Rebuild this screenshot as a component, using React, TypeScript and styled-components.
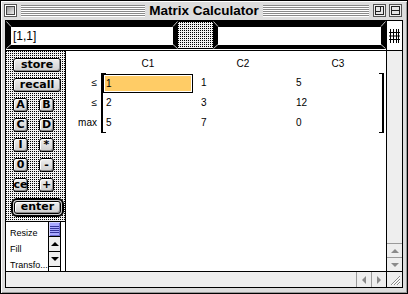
import React from "react";
import styled, { createGlobalStyle, css } from "styled-components";

const GlobalStyle = createGlobalStyle`
  html, body { margin: 0; padding: 0; background: #fff; }
  body { width: 408px; height: 294px; overflow: hidden; }
  #root { width: 408px; height: 294px; }
`;

const dither = css`
  background-color: #000;
  background-image:
    linear-gradient(to right, transparent 1px, #f2f2f2 1px),
    linear-gradient(to bottom, transparent 1px, #f2f2f2 1px);
  background-size: 2px 2px;
`;

const Window = styled.div`
  box-sizing: border-box;
  width: 408px;
  height: 294px;
  border: 1px solid #000;
  background: #dddddd;
  box-shadow: inset 1px 1px 0 #fff, inset -1px -1px 0 #999;
  display: flex;
  flex-direction: column;
`;

const TitleBar = styled.div`
  height: 19px;
  flex: none;
  display: grid;
  grid-template-columns: 1fr auto 1fr;
  align-items: center;
`;

const TitleSide = styled.div<{ $right?: boolean }>`
  display: flex;
  align-items: center;
  gap: ${(p) => (p.$right ? "4px" : "4px")};
  height: 100%;
  padding: ${(p) => (p.$right ? "0 5px 0 0" : "0 0 0 3px")};
`;

const Stripes = styled.div`
  flex: 1;
  height: 12px;
  background: repeating-linear-gradient(to bottom, #8a8a8a 0 1px, #ffffff 1px 2px);
`;

const TitleText = styled.div`
  padding: 0 4px;
  font-family: "Liberation Sans", Arial, sans-serif;
  font-weight: bold;
  font-size: 13.5px;
  line-height: 19px;
  color: #000;
  white-space: nowrap;
`;

const BoxGroup = styled.div`
  display: flex;
  gap: 3px;
`;

const Content = styled.div`
  margin: 0 4px 5px 4px;
  border: 1px solid #000;
  flex: 1;
  display: flex;
  flex-direction: column;
  background: #fff;
  min-height: 0;
`;

const TopRow = styled.div`
  box-sizing: border-box;
  height: 30px;
  flex: none;
  display: flex;
  align-items: flex-start;
  border-bottom: 1px solid #000;
  background: #fff;
`;

const FieldFrame = styled.div<{ $w: number }>`
  position: relative;
  box-sizing: border-box;
  width: ${(p) => p.$w}px;
  height: 28px;
  background: #000;
  padding: 6px 5px 4px 5px;
`;

const FieldInner = styled.div`
  height: 18px;
  background: #fff;
  padding-left: 2px;
  font-family: "Liberation Sans", Arial, sans-serif;
  font-size: 12px;
  line-height: 18px;
  color: #000;
`;

const CornerMarks = styled.svg`
  position: absolute;
  inset: 0;
  pointer-events: none;
`;

const Splitter = styled.div`
  box-sizing: border-box;
  width: 35px;
  height: 28px;
  border-top: 1px solid #000;
  border-bottom: 1px solid #000;
  ${dither};
`;

const IconCell = styled.div`
  box-sizing: border-box;
  width: 16px;
  align-self: stretch;
  border-left: 1px solid #000;
  display: flex;
  justify-content: center;
  padding-top: 8px;
  margin-left: auto;
`;

const Lower = styled.div`
  flex: 1;
  display: flex;
  border-bottom: 1px solid #000;
  min-height: 0;
`;

const LeftPanel = styled.div`
  box-sizing: border-box;
  width: 60px;
  border-right: 1px solid #000;
  display: flex;
  flex-direction: column;
`;

const Keypad = styled.div`
  flex: 1;
  ${dither};
  padding: 7px 0 0 7px;
  display: flex;
  flex-direction: column;
  gap: 6px;
`;

const KeyRow = styled.div`
  display: flex;
  gap: 11px;
`;

const Key = styled.button<{ $w?: number; $fill?: boolean }>`
  box-sizing: border-box;
  width: ${(p) => (p.$fill ? "100%" : `${p.$w}px`)};
  height: ${(p) => (p.$fill ? "100%" : "14px")};
  margin: 0;
  padding: 0 0 1px 0;
  border: 1px solid #000;
  border-radius: 3px;
  background: linear-gradient(#eeeeee, #cfcfcf);
  box-shadow: inset 1px 1px 0 #fff, inset -1px -1px 0 #8c8c8c;
  font-family: "DejaVu Sans", sans-serif;
  font-weight: bold;
  font-size: 11px;
  line-height: 12px;
  color: #000;
  display: flex;
  align-items: center;
  justify-content: center;
`;

const DefaultRing = styled.div`
  box-sizing: border-box;
  width: 53px;
  height: 19px;
  margin-left: -2px;
  border: 2px solid #000;
  border-radius: 6px;
  padding: 1px;
  background: #cfcfcf;
`;

const ListSection = styled.div`
  box-sizing: border-box;
  height: 50px;
  flex: none;
  border-top: 1px solid #000;
  background: #fff;
  display: flex;
`;

const ListItems = styled.div`
  width: 42px;
  padding: 3px 0 0 4px;
  box-sizing: border-box;
  font-family: "Liberation Sans", Arial, sans-serif;
  font-size: 9px;
  line-height: 16px;
  color: #000;
  overflow: hidden;
  white-space: nowrap;
`;

const ListScroll = styled.div`
  box-sizing: border-box;
  width: 13px;
  border-left: 1px solid #000;
  border-right: 1px solid #000;
  display: flex;
  flex-direction: column;
`;

const ListThumb = styled.div`
  box-sizing: border-box;
  height: 15px;
  border-bottom: 1px solid #000;
  background: #a9a9ff;
  box-shadow: inset 1px 1px 0 #d4d4ff, inset -1px -1px 0 #6a6ad0;
  display: flex;
  align-items: center;
  justify-content: center;
`;

const ListArrow = styled.div`
  box-sizing: border-box;
  height: 15px;
  border-bottom: 1px solid #000;
  background: #eeeeee;
  display: flex;
  align-items: center;
  justify-content: center;
`;

const MainArea = styled.div`
  flex: 1;
  background: #fff;
  padding-top: 6px;
  font-family: "Liberation Sans", Arial, sans-serif;
  font-size: 10px;
  color: #000;
`;

const HeaderRow = styled.div`
  display: flex;
  gap: 5px;
  margin-left: 37px;
  height: 14px;
  line-height: 14px;
  margin-bottom: 2px;
`;

const HeaderCell = styled.div`
  width: 90px;
  text-align: center;
`;

const MatrixRow = styled.div`
  display: flex;
`;

const RowLabels = styled.div`
  width: 31px;
  margin-right: 4px;
  display: flex;
  flex-direction: column;
`;

const RowLabel = styled.div`
  height: 20px;
  line-height: 20px;
  text-align: right;
`;

const Bracketed = styled.div`
  box-sizing: border-box;
  width: 283px;
  border-left: 2px solid #000;
  border-right: 2px solid #000;
  background-image: linear-gradient(#000, #000), linear-gradient(#000, #000),
    linear-gradient(#000, #000), linear-gradient(#000, #000);
  background-size: 3px 1px;
  background-repeat: no-repeat;
  background-position: left top, right top, left bottom, right bottom;
  display: grid;
  grid-template-columns: 90px 90px 89px;
  column-gap: 5px;
  grid-auto-rows: 20px;
`;

const Cell = styled.div`
  padding-left: 3px;
  line-height: 20px;
  white-space: nowrap;
`;

const SelectedCell = styled.div`
  box-sizing: border-box;
  margin-top: 1px;
  height: 19px;
  border: 1px solid #000;
  padding: 1px;
  background: #fff;
`;

const Highlight = styled.div`
  height: 15px;
  background: #ffcc66;
  padding-left: 1px;
  line-height: 15px;
`;

const VScroll = styled.div`
  box-sizing: border-box;
  width: 16px;
  border-left: 1px solid #000;
  background: #eeeeee;
  display: flex;
  flex-direction: column;
  justify-content: flex-end;
`;

const VArrow = styled.div`
  box-sizing: border-box;
  height: 14px;
  border-top: 1px solid #9a9a9a;
  display: flex;
  align-items: center;
  justify-content: center;
`;

const HScroll = styled.div`
  height: 15px;
  flex: none;
  display: flex;
  background: #eeeeee;
`;

const HTrack = styled.div`
  flex: 1;
`;

const HArrow = styled.div`
  box-sizing: border-box;
  width: 15px;
  border-left: 1px solid #9a9a9a;
  display: flex;
  align-items: center;
  justify-content: center;
`;

const GrowBox = styled.div`
  box-sizing: border-box;
  width: 16px;
  border-left: 1px solid #000;
  display: flex;
  align-items: center;
  justify-content: center;
`;

const CloseBox = () => (
  <svg width="13" height="13" viewBox="0 0 13 13">
    <defs>
      <linearGradient id="cb" x1="0" y1="0" x2="1" y2="1">
        <stop offset="0" stopColor="#8c8c8c" />
        <stop offset="1" stopColor="#f4f4f4" />
      </linearGradient>
    </defs>
    <rect x="0.5" y="0.5" width="12" height="12" fill="#fff" stroke="#555" />
    <rect x="2.5" y="2.5" width="8" height="8" fill="url(#cb)" stroke="#444" />
  </svg>
);

const ZoomBox = () => (
  <svg width="13" height="13" viewBox="0 0 13 13">
    <rect x="0.5" y="0.5" width="12" height="12" fill="#eee" stroke="#555" />
    <rect x="2.5" y="2.5" width="8" height="8" fill="#e6e6e6" stroke="#222" />
    <path d="M2.5 7.5 H7.5 V2.5" fill="none" stroke="#222" />
  </svg>
);

const CollapseBox = () => (
  <svg width="13" height="13" viewBox="0 0 13 13">
    <rect x="0.5" y="0.5" width="12" height="12" fill="#eee" stroke="#555" />
    <rect x="2.5" y="2.5" width="8" height="8" fill="#e6e6e6" stroke="#222" />
    <path d="M2.5 6.5 H10.5" stroke="#222" />
  </svg>
);

const Corners = ({ w }: { w: number }) => (
  <CornerMarks width={w} height={28} viewBox={`0 0 ${w} 28`}>
    <path
      d={`M0.5 0.5 L5 5.5 M${w - 0.5} 0.5 L${w - 5} 5.5 M0.5 27.5 L5 23.5 M${w - 0.5} 27.5 L${w - 5} 23.5`}
      stroke="#bdbdbd"
      strokeWidth="1"
    />
  </CornerMarks>
);

const GridIcon = () => (
  <svg width="11" height="14" viewBox="0 0 11 14">
    <path
      d="M1.5 0 V14 M4.5 0 V14 M7.5 0 V14 M9.5 0 V14 M0 3.5 H11 M0 7 H11 M0 10.5 H11"
      stroke="#000"
      strokeWidth="1"
      fill="none"
    />
  </svg>
);

const Tri = ({ dir, color }: { dir: "up" | "down" | "left" | "right"; color: string }) => {
  const d =
    dir === "up"
      ? "M0 5 L4 1 L8 5 Z"
      : dir === "down"
      ? "M0 1 L4 5 L8 1 Z"
      : dir === "left"
      ? "M5 0 L1 4 L5 8 Z"
      : "M1 0 L5 4 L1 8 Z";
  const horiz = dir === "left" || dir === "right";
  return (
    <svg width={horiz ? 6 : 8} height={horiz ? 8 : 6} viewBox={horiz ? "0 0 6 8" : "0 0 8 6"}>
      <path d={d} fill={color} />
    </svg>
  );
};

const ThumbLines = () => (
  <svg width="9" height="9" viewBox="0 0 9 9">
    <path d="M0 1.5 H9 M0 3.5 H9 M0 5.5 H9 M0 7.5 H9" stroke="#33339a" />
  </svg>
);

const Grip = () => (
  <svg width="12" height="12" viewBox="0 0 12 12">
    <path d="M2 11 L11 2 M5 11 L11 5 M8 11 L11 8" stroke="#8a8a8a" />
    <path d="M3 11 L11 3 M6 11 L11 6 M9 11 L11 9" stroke="#fff" />
  </svg>
);

const headers = ["C1", "C2", "C3"];
const labels = ["≤", "≤", "max"];
const values = [
  ["1", "1", "5"],
  ["2", "3", "12"],
  ["5", "7", "0"],
];

export default function App() {
  return (
    <>
      <GlobalStyle />
      <Window>
        <TitleBar>
          <TitleSide>
            <CloseBox />
            <Stripes />
          </TitleSide>
          <TitleText>Matrix Calculator</TitleText>
          <TitleSide $right>
            <Stripes />
            <BoxGroup>
              <ZoomBox />
              <CollapseBox />
            </BoxGroup>
          </TitleSide>
        </TitleBar>
        <Content>
          <TopRow>
            <FieldFrame $w={172}>
              <FieldInner>[1,1]</FieldInner>
              <Corners w={172} />
            </FieldFrame>
            <Splitter />
            <FieldFrame $w={173}>
              <FieldInner />
              <Corners w={173} />
            </FieldFrame>
            <IconCell>
              <GridIcon />
            </IconCell>
          </TopRow>
          <Lower>
            <LeftPanel>
              <Keypad>
                <Key $w={48}>store</Key>
                <Key $w={48}>recall</Key>
                <KeyRow>
                  <Key $w={15}>A</Key>
                  <Key $w={15}>B</Key>
                </KeyRow>
                <KeyRow>
                  <Key $w={15}>C</Key>
                  <Key $w={15}>D</Key>
                </KeyRow>
                <KeyRow>
                  <Key $w={15}>I</Key>
                  <Key $w={15}>*</Key>
                </KeyRow>
                <KeyRow>
                  <Key $w={15}>0</Key>
                  <Key $w={15}>-</Key>
                </KeyRow>
                <KeyRow>
                  <Key $w={15}>ce</Key>
                  <Key $w={15}>+</Key>
                </KeyRow>
                <DefaultRing>
                  <Key $fill>enter</Key>
                </DefaultRing>
              </Keypad>
              <ListSection>
                <ListItems>
                  <div>Resize</div>
                  <div>Fill</div>
                  <div>Transfo...</div>
                </ListItems>
                <ListScroll>
                  <ListThumb>
                    <ThumbLines />
                  </ListThumb>
                  <ListArrow>
                    <Tri dir="up" color="#000" />
                  </ListArrow>
                  <ListArrow>
                    <Tri dir="down" color="#000" />
                  </ListArrow>
                </ListScroll>
              </ListSection>
            </LeftPanel>
            <MainArea>
              <HeaderRow>
                {headers.map((h) => (
                  <HeaderCell key={h}>{h}</HeaderCell>
                ))}
              </HeaderRow>
              <MatrixRow>
                <RowLabels>
                  {labels.map((l, i) => (
                    <RowLabel key={i}>{l}</RowLabel>
                  ))}
                </RowLabels>
                <Bracketed>
                  {values.map((row, r) =>
                    row.map((v, c) =>
                      r === 0 && c === 0 ? (
                        <SelectedCell key={`${r}-${c}`}>
                          <Highlight>{v}</Highlight>
                        </SelectedCell>
                      ) : (
                        <Cell key={`${r}-${c}`}>{v}</Cell>
                      )
                    )
                  )}
                </Bracketed>
              </MatrixRow>
            </MainArea>
            <VScroll>
              <VArrow>
                <Tri dir="up" color="#8a8a8a" />
              </VArrow>
              <VArrow>
                <Tri dir="down" color="#8a8a8a" />
              </VArrow>
            </VScroll>
          </Lower>
          <HScroll>
            <HTrack />
            <HArrow>
              <Tri dir="left" color="#8a8a8a" />
            </HArrow>
            <HArrow>
              <Tri dir="right" color="#8a8a8a" />
            </HArrow>
            <GrowBox>
              <Grip />
            </GrowBox>
          </HScroll>
        </Content>
      </Window>
    </>
  );
}
